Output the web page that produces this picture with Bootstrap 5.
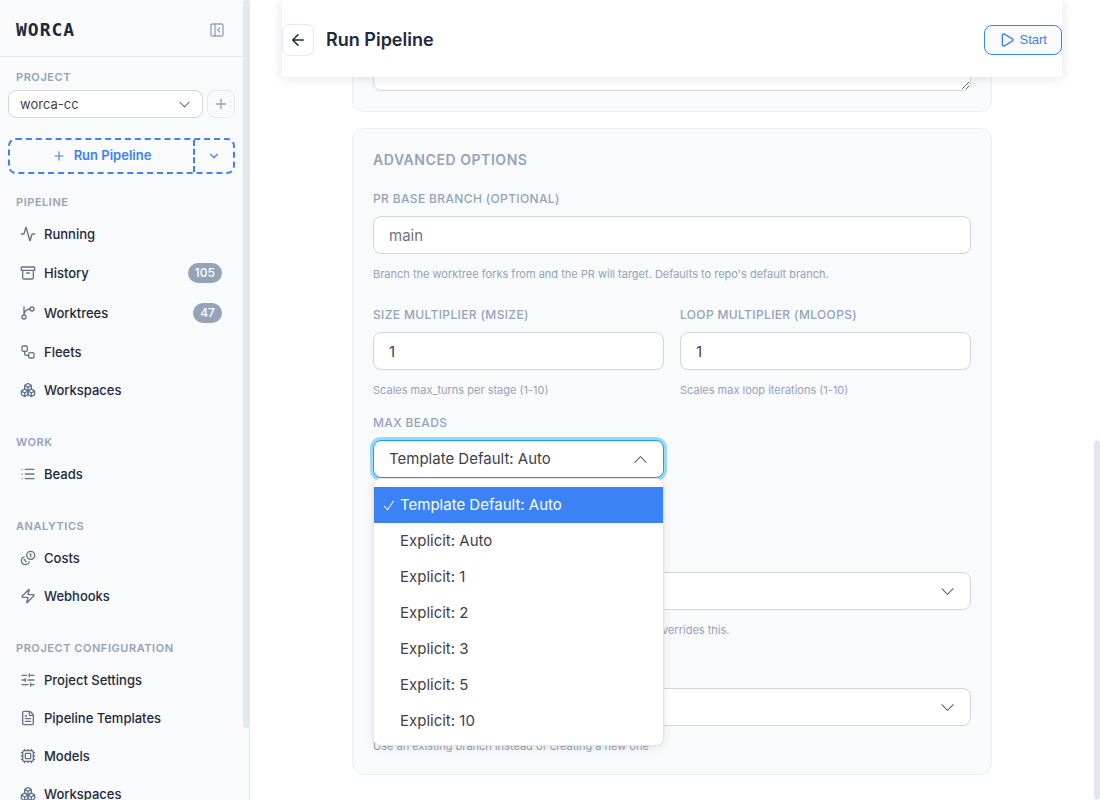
<!DOCTYPE html>
<html lang="en">
<head>
<meta charset="utf-8">
<meta name="viewport" content="width=device-width, initial-scale=1">
<title>Worca – Run Pipeline</title>
<link rel="stylesheet" href="https://cdn.jsdelivr.net/npm/bootstrap@5.3.0/dist/css/bootstrap.min.css">
<script src="https://cdn.jsdelivr.net/npm/bootstrap@5.3.0/dist/js/bootstrap.bundle.min.js"></script>
<style>
  :root {
    --ink: #1e293b;
    --muted: #94a3b8;
    --panel: #f8fafc;
    --line: #e2e8f0;
    --field: #d4d4d8;
    --accent: #3b82f6;
  }
  body { font-family: Inter, "Liberation Sans", sans-serif; color: var(--ink); background: #fff; }
  svg { display: block; flex: none; }
  .ico { width: 14px; height: 14px; fill: none; stroke: currentColor; stroke-width: 2; stroke-linecap: round; stroke-linejoin: round; }
  .ico-lg { width: 16px; height: 16px; }

  /* sidebar */
  .sidebar { width: 250px; flex: none; background: var(--panel); border-right: 1px solid var(--line); }
  .brand-bar { height: 57px; padding: 4px 24px 0 16px; border-bottom: 1px solid var(--line); }
  .brand { font: 700 18px/24px "DejaVu Sans Mono", monospace; letter-spacing: 1px; }
  .brand-bar button { color: var(--muted); }
  .side-label { font-size: 11px; line-height: 16px; font-weight: 600; letter-spacing: .05em; color: var(--muted); text-transform: uppercase; padding-left: 16px; margin: 0; }
  .project-block { padding-top: 12px; }
  .project-row { gap: 4px; padding: 5px 14px 0 8px; }
  .project-select { height: 28px; padding: 0 11px; font-size: 13px; line-height: 20px; color: #3f3f46; border: 1px solid var(--field); border-radius: 8px; background-size: 13px 13px; background-position: right 11px center; }
  .add-project { width: 28px; height: 28px; flex: none; color: var(--muted); border: 1px solid var(--line); border-radius: 8px; }
  .run-split { height: 36px; margin: 20px 14px 0 8px; border: 2px dashed var(--accent); border-radius: 8px; }
  .run-split button { color: var(--accent); font-size: 13px; font-weight: 600; }
  .run-split .run-more { width: 40px; border-left: 2px dashed var(--accent); }
  .side-section { margin-bottom: 26px; }
  .side-links { gap: 2px; padding: 6px 27px 0 20px; }
  .side-links a { min-height: 36px; gap: 8px; font-size: 13px; line-height: 20px; font-weight: 500; color: var(--ink); text-decoration: none; }
  .side-links a.counted { min-height: 38px; }
  .side-links .ico { width: 16px; height: 16px; color: #64748b; }
  .count { min-width: 29px; padding: 0 7px; font-size: 12px; line-height: 20px; font-weight: 500; color: #fff; background: var(--muted); border-radius: 10px; text-align: center; }
  .thumb { width: 6px; right: 0; background: var(--line); border-radius: 3px; }
  .thumb-side { top: 0; height: 91%; }
  .thumb-main { top: 55%; bottom: 0; }

  /* main area */
  .workspace { min-width: 0; padding: 0 38px 0 32px; }
  .page-head { height: 77px; padding-top: 3px; background: #fff; z-index: 2; box-shadow: 0 1px 10px rgba(15, 23, 42, .12); }
  .page-title { font-size: 18px; line-height: 28px; font-weight: 600; margin: 0; }
  .back-btn { width: 32px; height: 32px; border: 1px solid var(--line); border-radius: 8px; color: var(--ink); background: #fff; }
  .back-btn .ico { width: 18px; height: 18px; }
  .start-btn { height: 30px; padding: 0 14px; gap: 5px; font-family: "Liberation Sans", Arial, sans-serif; font-size: 13px; line-height: 20px; color: var(--accent); background: var(--panel); border: 1px solid var(--accent); border-radius: 8px; }
  .form-stack { max-width: 640px; margin: -50px auto 0; gap: 16px; }
  .panel { padding: 20px; background: var(--panel); border: 1px solid #e9eef5; border-radius: 12px; }
  .panel textarea { display: block; width: 100%; height: 43px; border: 1px solid var(--field); border-radius: 8px; background: #fff; }
  .panel-title { font-size: 14px; line-height: 22px; font-weight: 600; letter-spacing: .04em; color: var(--muted); text-transform: uppercase; margin: 0 0 19px; }
  .field-label { display: block; font-size: 12px; line-height: 18px; font-weight: 500; letter-spacing: .03em; color: var(--muted); text-transform: uppercase; margin-bottom: 8px; }
  .field-box { height: 38px; padding: 0 15px; font-size: 15px; line-height: 24px; color: #3f3f46; border: 1px solid var(--field); border-radius: 8px; background-color: #fff; }
  .field-box::placeholder { color: #71717a; }
  select.field-box, .project-select { background-image: url("data:image/svg+xml,%3Csvg xmlns='http://www.w3.org/2000/svg' viewBox='0 0 16 16' fill='%2352525b'%3E%3Cpath d='M1.646 4.646a.5.5 0 0 1 .708 0L8 10.293l5.646-5.647a.5.5 0 0 1 .708.708l-6 6a.5.5 0 0 1-.708 0l-6-6a.5.5 0 0 1 0-.708z'/%3E%3C/svg%3E"); }
  select.field-box { background-size: 15px 15px; background-position: right 15px center; }
  select.field-open { border-color: #0ea5e9; box-shadow: 0 0 0 3px rgba(14, 165, 233, .4); background-image: url("data:image/svg+xml,%3Csvg xmlns='http://www.w3.org/2000/svg' viewBox='0 0 16 16' fill='%2352525b'%3E%3Cpath d='M1.646 11.354a.5.5 0 0 0 .708 0L8 5.707l5.646 5.647a.5.5 0 0 0 .708-.708l-6-6a.5.5 0 0 0-.708 0l-6 6a.5.5 0 0 0 0 .708z'/%3E%3C/svg%3E"); }
  .hint { font-size: 11px; line-height: 16px; color: var(--muted); margin: 12px 0 0; }
  .field-group { margin-bottom: 24px; }
  .beads-group { width: calc(50% - 8px); margin-top: -8px; }
  .beads-group .hint { min-height: 32px; }
  .beads-menu { top: 100%; left: 0; right: 0; z-index: 1; margin: 0; padding: 8px 0 6px; background: #fff; border: 1px solid #e4e4e7; border-radius: 8px; box-shadow: 0 2px 8px rgba(63, 63, 70, .12); }
  .beads-menu button { display: flex; align-items: center; width: 100%; height: 36px; padding: 0 8px; gap: 4px; font-size: 15px; line-height: 24px; color: #3f3f46; background: none; border: 0; text-align: left; }
  .beads-menu .tick { width: 14px; height: 14px; fill: currentColor; flex: none; }
  .beads-menu button.chosen { color: #fff; background: var(--accent); }
</style>
</head>
<body>
<svg class="d-none" aria-hidden="true">
  <symbol id="i-panel" viewBox="0 0 24 24"><rect x="3" y="3" width="18" height="18" rx="2"/><path d="M9 3v18M16 15l-3-3 3-3"/></symbol>
  <symbol id="i-plus" viewBox="0 0 24 24"><path d="M5 12h14M12 5v14"/></symbol>
  <symbol id="i-down" viewBox="0 0 24 24"><path d="m6 9 6 6 6-6"/></symbol>
  <symbol id="i-back" viewBox="0 0 24 24"><path d="m12 19-7-7 7-7M19 12H5"/></symbol>
  <symbol id="i-play" viewBox="0 0 24 24"><path d="M5 5a2 2 0 0 1 3.008-1.728l11.997 6.998a2 2 0 0 1 .003 3.458l-12 7A2 2 0 0 1 5 19z"/></symbol>
  <symbol id="i-activity" viewBox="0 0 24 24"><path d="M22 12h-2.48a2 2 0 0 0-1.93 1.46l-2.35 8.36a.25.25 0 0 1-.48 0L9.24 2.18a.25.25 0 0 0-.48 0l-2.35 8.36A2 2 0 0 1 4.49 12H2"/></symbol>
  <symbol id="i-archive" viewBox="0 0 24 24"><rect x="2" y="3" width="20" height="5" rx="1"/><path d="M4 8v11a2 2 0 0 0 2 2h12a2 2 0 0 0 2-2V8M10 12h4"/></symbol>
  <symbol id="i-branch" viewBox="0 0 24 24"><path d="M15 6a9 9 0 0 0-9 9V3"/><circle cx="18" cy="6" r="3"/><circle cx="6" cy="18" r="3"/></symbol>
  <symbol id="i-flow" viewBox="0 0 24 24"><rect x="3" y="3" width="8" height="8" rx="2"/><path d="M7 11v4a2 2 0 0 0 2 2h4"/><rect x="13" y="13" width="8" height="8" rx="2"/></symbol>
  <symbol id="i-boxes" viewBox="0 0 24 24"><path d="M2.97 12.92A2 2 0 0 0 2 14.63v3.24a2 2 0 0 0 .97 1.71l3 1.8a2 2 0 0 0 2.06 0L12 19v-5.5l-5-3-4.03 2.42Z"/><path d="m7 16.5-4.74-2.85M7 16.5l5-3M7 16.5v5.17"/><path d="M12 13.5V19l3.97 2.38a2 2 0 0 0 2.06 0l3-1.8a2 2 0 0 0 .97-1.71v-3.24a2 2 0 0 0-.97-1.71L17 10.5l-5 3Z"/><path d="m17 16.5-5-3M17 16.5l4.74-2.85M17 16.5v5.17"/><path d="M7.97 4.42A2 2 0 0 0 7 6.13v4.37l5 3 5-3V6.13a2 2 0 0 0-.97-1.71l-3-1.8a2 2 0 0 0-2.06 0l-3 1.8Z"/><path d="M12 8 7.26 5.15M12 8l4.74-2.85M12 13.5V8"/></symbol>
  <symbol id="i-list" viewBox="0 0 24 24"><path d="M3 5h.01M3 12h.01M3 19h.01M8 5h13M8 12h13M8 19h13"/></symbol>
  <symbol id="i-coins" viewBox="0 0 24 24"><path d="M13.744 17.736a6 6 0 1 1-7.48-7.48M15 6h1v4M6.134 14.768l.866-.5 2 3.464"/><circle cx="16" cy="8" r="6"/></symbol>
  <symbol id="i-zap" viewBox="0 0 24 24"><path d="M4 14a1 1 0 0 1-.78-1.63l9.9-10.2a.5.5 0 0 1 .86.46l-1.92 6.02A1 1 0 0 0 13 10h7a1 1 0 0 1 .78 1.63l-9.9 10.2a.5.5 0 0 1-.86-.46l1.92-6.02A1 1 0 0 0 11 14z"/></symbol>
  <symbol id="i-sliders" viewBox="0 0 24 24"><path d="M10 5H3M12 19H3M14 3v4M16 17v4M21 12h-9M21 19h-5M21 5h-7M8 10v4M8 12H3"/></symbol>
  <symbol id="i-file" viewBox="0 0 24 24"><path d="M6 22a2 2 0 0 1-2-2V4a2 2 0 0 1 2-2h8a2.4 2.4 0 0 1 1.704.706l3.588 3.588A2.4 2.4 0 0 1 20 8v12a2 2 0 0 1-2 2z"/><path d="M14 2v5a1 1 0 0 0 1 1h5M10 9H8M16 13H8M16 17H8"/></symbol>
  <symbol id="i-cpu" viewBox="0 0 24 24"><path d="M12 20v2M12 2v2M17 20v2M17 2v2M2 12h2M2 17h2M2 7h2M20 12h2M20 17h2M20 7h2M7 20v2M7 2v2"/><rect x="4" y="4" width="16" height="16" rx="2"/><rect x="8" y="8" width="8" height="8" rx="1"/></symbol>
  <symbol id="i-check" viewBox="0 0 16 16"><path d="M13.4 2.9a.5.5 0 0 1 .15.7l-6.6 10a.5.5 0 0 1-.78.08l-3.7-3.8a.5.5 0 1 1 .72-.7l3.26 3.35 6.25-9.48a.5.5 0 0 1 .7-.15z"/></symbol>
</svg>

<div class="d-flex vh-100 overflow-hidden">
  <aside class="sidebar position-relative overflow-hidden">
    <div class="brand-bar d-flex align-items-center justify-content-between">
      <span class="brand">WORCA</span>
      <button type="button" class="btn p-0 border-0" aria-label="Collapse sidebar"><svg class="ico ico-lg"><use href="#i-panel"/></svg></button>
    </div>

    <div class="project-block">
      <label class="side-label d-block" for="project">Project</label>
      <div class="project-row d-flex">
        <select id="project" class="form-select project-select"><option>worca-cc</option></select>
        <button type="button" class="add-project btn p-0 d-flex align-items-center justify-content-center" aria-label="Add project"><svg class="ico ico-lg"><use href="#i-plus"/></svg></button>
      </div>
    </div>

    <div class="run-split d-flex">
      <button type="button" class="btn p-0 border-0 flex-grow-1 d-flex align-items-center justify-content-center gap-2"><svg class="ico"><use href="#i-plus"/></svg>Run Pipeline</button>
      <button type="button" class="run-more btn p-0 border-top-0 border-end-0 border-bottom-0 rounded-0 d-flex align-items-center justify-content-center" aria-label="More run options"><svg class="ico"><use href="#i-down"/></svg></button>
    </div>

    <nav class="side-nav pt-3 mt-1">
      <section class="side-section">
        <h2 class="side-label">Pipeline</h2>
        <div class="side-links d-flex flex-column">
          <a href="#" class="d-flex align-items-center"><svg class="ico"><use href="#i-activity"/></svg>Running</a>
          <a href="#" class="counted d-flex align-items-center"><svg class="ico"><use href="#i-archive"/></svg>History<span class="count ms-auto">105</span></a>
          <a href="#" class="counted d-flex align-items-center"><svg class="ico"><use href="#i-branch"/></svg>Worktrees<span class="count ms-auto">47</span></a>
          <a href="#" class="d-flex align-items-center"><svg class="ico"><use href="#i-flow"/></svg>Fleets</a>
          <a href="#" class="d-flex align-items-center"><svg class="ico"><use href="#i-boxes"/></svg>Workspaces</a>
        </div>
      </section>
      <section class="side-section">
        <h2 class="side-label">Work</h2>
        <div class="side-links d-flex flex-column">
          <a href="#" class="d-flex align-items-center"><svg class="ico"><use href="#i-list"/></svg>Beads</a>
        </div>
      </section>
      <section class="side-section">
        <h2 class="side-label">Analytics</h2>
        <div class="side-links d-flex flex-column">
          <a href="#" class="d-flex align-items-center"><svg class="ico"><use href="#i-coins"/></svg>Costs</a>
          <a href="#" class="d-flex align-items-center"><svg class="ico"><use href="#i-zap"/></svg>Webhooks</a>
        </div>
      </section>
      <section class="side-section">
        <h2 class="side-label">Project Configuration</h2>
        <div class="side-links d-flex flex-column">
          <a href="#" class="d-flex align-items-center"><svg class="ico"><use href="#i-sliders"/></svg>Project Settings</a>
          <a href="#" class="d-flex align-items-center"><svg class="ico"><use href="#i-file"/></svg>Pipeline Templates</a>
          <a href="#" class="d-flex align-items-center"><svg class="ico"><use href="#i-cpu"/></svg>Models</a>
          <a href="#" class="d-flex align-items-center"><svg class="ico"><use href="#i-boxes"/></svg>Workspaces</a>
        </div>
      </section>
    </nav>
    <div class="thumb thumb-side position-absolute"></div>
  </aside>

  <main class="workspace flex-grow-1 position-relative overflow-hidden">
    <header class="page-head position-relative d-flex align-items-center">
      <button type="button" class="back-btn btn p-0 d-flex align-items-center justify-content-center" aria-label="Back"><svg class="ico"><use href="#i-back"/></svg></button>
      <h1 class="page-title ms-2 ps-1">Run Pipeline</h1>
      <button type="button" class="start-btn btn ms-auto d-flex align-items-center"><svg class="ico ico-lg"><use href="#i-play"/></svg>Start</button>
    </header>

    <form class="form-stack d-flex flex-column">
      <section class="panel"><textarea aria-label="Prompt"></textarea></section>

      <section class="panel">
        <h2 class="panel-title">Advanced Options</h2>

        <div class="field-group">
          <label class="field-label" for="base">PR Base Branch (optional)</label>
          <input id="base" type="text" class="form-control field-box" placeholder="main">
          <p class="hint">Branch the worktree forks from and the PR will target. Defaults to repo's default branch.</p>
        </div>

        <div class="row g-3 field-group mt-0">
          <div class="col-6 mt-0">
            <label class="field-label" for="msize">Size Multiplier (msize)</label>
            <input id="msize" type="text" inputmode="numeric" class="form-control field-box" value="1">
            <p class="hint">Scales max_turns per stage (1-10)</p>
          </div>
          <div class="col-6 mt-0">
            <label class="field-label" for="mloops">Loop Multiplier (mloops)</label>
            <input id="mloops" type="text" inputmode="numeric" class="form-control field-box" value="1">
            <p class="hint">Scales max loop iterations (1-10)</p>
          </div>
        </div>

        <div class="field-group beads-group">
          <label class="field-label" for="beads">Max Beads</label>
          <div class="position-relative">
            <select id="beads" class="form-select field-box field-open"><option>Template Default: Auto</option></select>
            <div class="beads-menu position-absolute" role="listbox" aria-label="Max Beads">
              <button type="button" role="option" aria-selected="true" class="chosen"><svg class="tick"><use href="#i-check"/></svg>Template Default: Auto</button>
              <button type="button" role="option"><span class="tick"></span>Explicit: Auto</button>
              <button type="button" role="option"><span class="tick"></span>Explicit: 1</button>
              <button type="button" role="option"><span class="tick"></span>Explicit: 2</button>
              <button type="button" role="option"><span class="tick"></span>Explicit: 3</button>
              <button type="button" role="option"><span class="tick"></span>Explicit: 5</button>
              <button type="button" role="option"><span class="tick"></span>Explicit: 10</button>
            </div>
          </div>
          <p class="hint"></p>
        </div>

        <div class="field-group">
          <label class="field-label" for="plan">Plan File</label>
          <select id="plan" class="form-select field-box"><option>None</option></select>
          <p class="hint">Skips planning when a plan is found. A template value overrides this.</p>
        </div>

        <div>
          <label class="field-label" for="branch">Branch</label>
          <select id="branch" class="form-select field-box"><option>New branch</option></select>
          <p class="hint">Use an existing branch instead of creating a new one</p>
        </div>
      </section>
    </form>
    <div class="thumb thumb-main position-absolute"></div>
  </main>
</div>
</body>
</html>
